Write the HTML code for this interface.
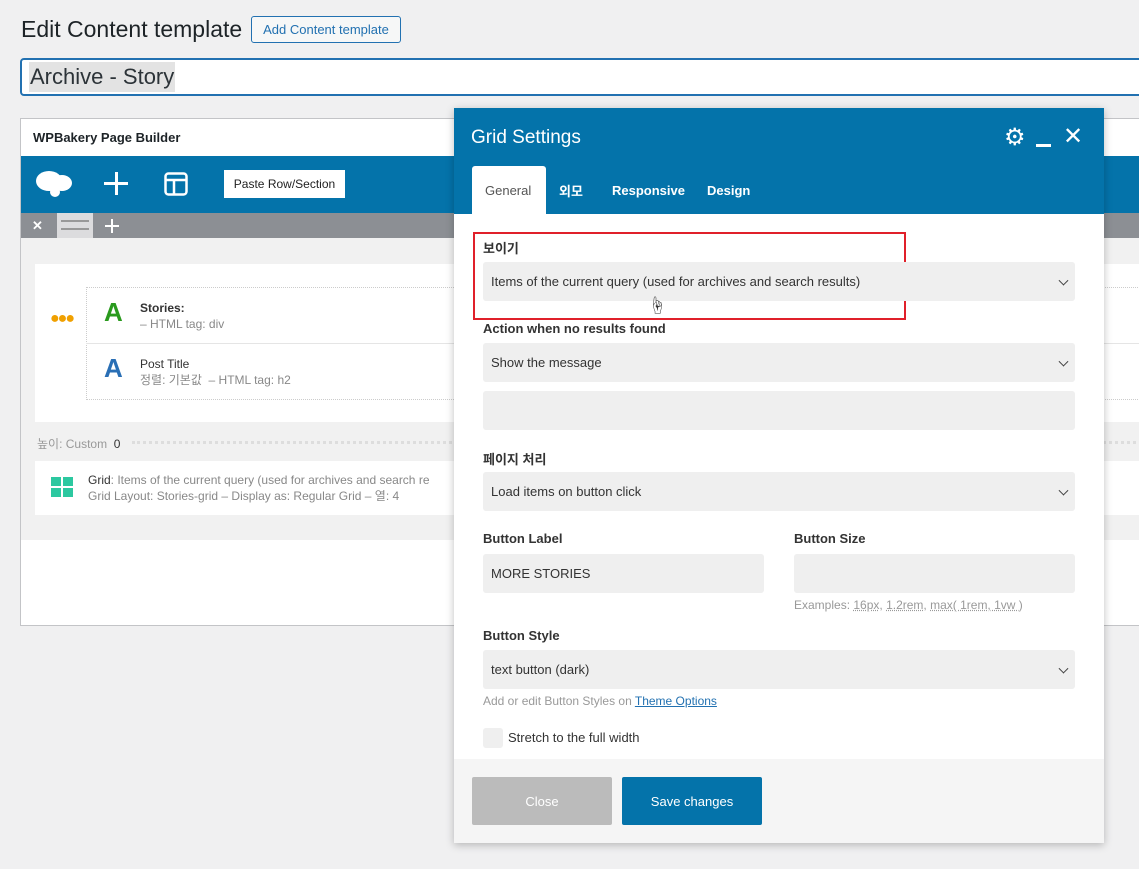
<!DOCTYPE html>
<html><head><meta charset="utf-8"><style>
*{box-sizing:border-box;margin:0;padding:0}
body{width:1139px;height:869px;background:#f0f0f1;font-family:"Liberation Sans","Noto Sans CJK KR",sans-serif;position:relative;overflow:hidden;color:#333}
.a{position:absolute}
.lbl{font-size:13px;font-weight:bold;color:#333}
.sel{background:#efefef;border-radius:3px;font-size:13px;color:#333;padding-left:8px;display:flex;align-items:center}
.chev{position:absolute;right:8px;top:50%;width:7px;height:7px;border-right:1.5px solid #444;border-bottom:1.5px solid #444;transform:translateY(-70%) rotate(45deg)}
</style></head><body>
<div class="a" style="left:21px;top:16px;font-size:23px;color:#1d2327">Edit Content template</div>
<div class="a" style="left:251px;top:16px;width:150px;height:27px;border:1px solid #2271b1;border-radius:3px;background:#f6f7f7;color:#2271b1;font-size:13px;display:flex;align-items:center;justify-content:center">Add Content template</div>
<div class="a" style="left:20px;top:58px;width:1130px;height:38px;border:2px solid #2271b1;border-radius:4px;background:#fff"></div>
<div class="a" style="left:29px;top:62px;height:30px;background:#e3e3e3;font-size:22px;color:#2c3338;padding:0 1px;line-height:30px">Archive - Story</div>

<div class="a" style="left:20px;top:118px;width:1130px;height:508px;border:1px solid #c3c4c7;background:#fff"></div>
<div class="a" style="left:33px;top:130px;font-size:13px;font-weight:bold;color:#1d2327">WPBakery Page Builder</div>
<div class="a" style="left:21px;top:156px;width:1120px;height:57px;background:#0473aa"></div>
<svg class="a" style="left:35px;top:168px" width="38" height="30" viewBox="0 0 38 30"><ellipse cx="14" cy="13" rx="13" ry="10" fill="#fff"/><ellipse cx="27" cy="15" rx="10" ry="8" fill="#fff"/><circle cx="20" cy="24" r="5" fill="#fff"/></svg>
<div class="a" style="left:104px;top:182px;width:24px;height:3px;background:#fff"></div>
<div class="a" style="left:115px;top:172px;width:3px;height:23px;background:#fff"></div>
<svg class="a" style="left:164px;top:172px" width="24" height="24"><rect x="1.5" y="1.5" width="21" height="21" rx="3" fill="none" stroke="#fff" stroke-width="2.5"/><path d="M2 8H22M10 8V22" stroke="#fff" stroke-width="2.5"/></svg>
<div class="a" style="left:224px;top:170px;width:121px;height:28px;background:#fff;font-size:12px;color:#222;display:flex;align-items:center;justify-content:center">Paste Row/Section</div>
<div class="a" style="left:21px;top:213px;width:1120px;height:25px;background:#8c8f94"></div>
<div class="a" style="left:57px;top:213px;width:36px;height:25px;background:#dcdcde"></div>
<div class="a" style="left:61px;top:220px;width:28px;height:10px;border-top:2px solid #999;border-bottom:2px solid #999"></div>
<div class="a" style="left:32px;top:219px;width:14px;height:14px;color:#fff;font-size:13px;font-weight:bold;line-height:14px">✕</div>
<div class="a" style="left:105px;top:225px;width:14px;height:2px;background:#fff"></div>
<div class="a" style="left:111px;top:219px;width:2px;height:14px;background:#fff"></div>
<div class="a" style="left:21px;top:238px;width:1120px;height:302px;background:#f1f1f1"></div>
<div class="a" style="left:35px;top:264px;width:1110px;height:158px;background:#fff"></div>
<div class="a" style="left:50px;top:310px;color:#f0a000;font-size:16px;letter-spacing:-2px;font-weight:bold">●●●</div>
<div class="a" style="left:86px;top:287px;width:1060px;height:113px;border:1px dotted #ccc"></div>
<div class="a" style="left:86px;top:343px;width:1060px;height:1px;background:#e5e5e5"></div>
<div class="a" style="left:104px;top:297px;font-size:26px;font-weight:bold;color:#2a9a1e">A</div>
<div class="a" style="left:140px;top:300px;font-size:12px;color:#333;font-weight:bold;line-height:16px">Stories:<br><span style="font-weight:normal;color:#888">– HTML tag: div</span></div>
<div class="a" style="left:104px;top:353px;font-size:26px;font-weight:bold;color:#2a6fb5">A</div>
<div class="a" style="left:140px;top:356px;font-size:12px;color:#333;line-height:16px">Post Title<br><span style="color:#888">정렬: 기본값 &nbsp;– HTML tag: h2</span></div>
<div class="a" style="left:37px;top:435px;font-size:12px;color:#999">높이: Custom <span style="color:#333">&nbsp;0</span></div>
<div class="a" style="left:132px;top:441px;width:1010px;border-top:3px dotted #ddd"></div>
<div class="a" style="left:35px;top:461px;width:1110px;height:54px;background:#fff"></div>
<svg class="a" style="left:51px;top:477px" width="22" height="20"><rect width="10" height="9" fill="#2cc8a0"/><rect x="12" width="10" height="9" fill="#2cc8a0"/><rect y="11" width="10" height="9" fill="#2cc8a0"/><rect x="12" y="11" width="10" height="9" fill="#2cc8a0"/></svg>
<div class="a" style="left:88px;top:472px;font-size:12px;color:#888;line-height:16px;white-space:nowrap"><b style="color:#333;font-weight:normal">Grid</b>: Items of the current query (used for archives and search re<br>Grid Layout: Stories-grid – Display as: Regular Grid – 열: 4</div>

<div class="a" style="left:454px;top:108px;width:650px;height:735px;background:#fff;box-shadow:0 2px 8px rgba(0,0,0,.25)"></div>
<div class="a" style="left:454px;top:108px;width:650px;height:106px;background:#0473aa"></div>
<div class="a" style="left:471px;top:127px;font-size:19px;color:#fff">Grid Settings</div>
<div class="a" style="left:1004px;top:124px;font-size:24px;color:#fff;line-height:28px">⚙</div>
<div class="a" style="left:1036px;top:144px;width:15px;height:3px;background:#fff"></div>
<div class="a" style="left:1063px;top:122px;font-size:24px;color:#fff">✕</div>
<div class="a" style="left:472px;top:166px;width:74px;height:48px;background:#fff;border-radius:3px 3px 0 0"></div>
<div class="a" style="left:485px;top:183px;font-size:13px;color:#555">General</div>
<div class="a" style="left:559px;top:181px;font-size:13px;color:#fff;font-weight:bold">외모</div>
<div class="a" style="left:612px;top:183px;font-size:13px;color:#fff;font-weight:bold">Responsive</div>
<div class="a" style="left:707px;top:183px;font-size:13px;color:#fff;font-weight:bold">Design</div>

<div class="a" style="left:473px;top:232px;width:433px;height:88px;border:2px solid #e0202a"></div>
<div class="a lbl" style="left:483px;top:238px">보이기</div>
<div class="a sel" style="left:483px;top:262px;width:592px;height:39px">Items of the current query (used for archives and search results)<i class="chev"></i></div>
<div class="a" style="left:648px;top:292px;font-size:18px">☝</div>
<div class="a lbl" style="left:483px;top:321px">Action when no results found</div>
<div class="a sel" style="left:483px;top:343px;width:592px;height:39px">Show the message<i class="chev"></i></div>
<div class="a sel" style="left:483px;top:391px;width:592px;height:39px"></div>
<div class="a lbl" style="left:483px;top:449px">페이지 처리</div>
<div class="a sel" style="left:483px;top:472px;width:592px;height:39px">Load items on button click<i class="chev"></i></div>
<div class="a lbl" style="left:483px;top:531px">Button Label</div>
<div class="a lbl" style="left:794px;top:531px">Button Size</div>
<div class="a sel" style="left:483px;top:554px;width:281px;height:39px">MORE STORIES</div>
<div class="a sel" style="left:794px;top:554px;width:281px;height:39px"></div>
<div class="a" style="left:794px;top:598px;font-size:12px;color:#999">Examples: <u style="text-decoration-style:dotted">16px</u>, <u style="text-decoration-style:dotted">1.2rem</u>, <u style="text-decoration-style:dotted">max( 1rem, 1vw )</u></div>
<div class="a lbl" style="left:483px;top:628px">Button Style</div>
<div class="a sel" style="left:483px;top:650px;width:592px;height:39px">text button (dark)<i class="chev"></i></div>
<div class="a" style="left:483px;top:694px;font-size:12px;color:#999">Add or edit Button Styles on <u style="color:#2271b1">Theme Options</u></div>
<div class="a" style="left:483px;top:728px;width:20px;height:20px;background:#efefef;border-radius:3px"></div>
<div class="a" style="left:508px;top:730px;font-size:13px;color:#333">Stretch to the full width</div>
<div class="a" style="left:454px;top:759px;width:650px;height:84px;background:#f5f5f5"></div>
<div class="a" style="left:472px;top:777px;width:140px;height:48px;background:#bbb;border-radius:2px;color:#fff;font-size:13px;display:flex;align-items:center;justify-content:center">Close</div>
<div class="a" style="left:622px;top:777px;width:140px;height:48px;background:#0473aa;border-radius:2px;color:#fff;font-size:13px;display:flex;align-items:center;justify-content:center">Save changes</div>
</body></html>
